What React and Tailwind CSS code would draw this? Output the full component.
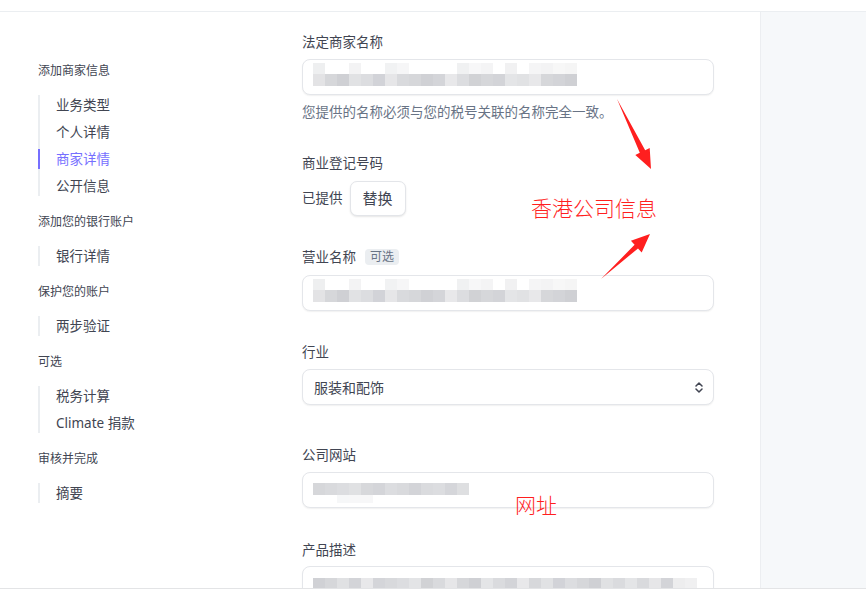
import React from "react";

const NAME_TOP = [
  "#eeeff0", null, null, "#f3f3f4", null, null, "#f1f2f3", "#f6f6f7", null, null, null, null,
  "#f0f1f2", "#f7f7f8", "#f4f4f5", null, "#f1f1f2", null, "#f5f5f6", "#f3f3f4", "#f7f7f7", "#f5f5f5",
];
const NAME_BOTTOM = [
  "#e3e3e5", "#d6d7da", "#cfd0d4", "#e1e2e4", "#dcdde0", "#d2d3d8", "#e6e6e8", "#d9dadd", "#d6d7da", "#d0d1d5", "#d4d5d9",
  "#e8e8ea", "#dcdde0", "#d1d2d5", "#d6d7da", "#d3d4d8", "#e4e5e7", "#e1e2e4", "#e8e8ea", "#d6d7da", "#d3d4d8", "#cfd0d4",
];
const SITE_ROW = [
  "#d6d7da", "#d9dadd", "#dcdde0", "#e0e1e3", "#d7d8db", "#d4d5d9", "#dcdde0", "#d9dadd", "#d3d4d8", "#dadbde", "#dcdde0", "#d5d6da", "#dedfe1",
];
const SITE_LOW = [null, null, "#f6f7f8", "#f7f7f8", "#f7f7f8", null, null, null, null, null, null, null, null];
const DESC_ROW = [
  "#d0d1d5", "#d6d7da", "#e0e1e3", "#d3d4d8", "#e8e8ea", "#d4d5d9", "#d8d9dc", "#dcdde0", "#e3e4e6", "#d1d2d5", "#d9dadd",
  "#e6e6e8", "#d6d7da", "#cfd0d4", "#e4e5e7", "#dadbde", "#d3d4d8", "#e8e8ea", "#d7d8db", "#e1e2e4", "#d2d3d8", "#dcdde0",
  "#d6d7da", "#cfd0d4", "#e0e1e3", "#dadbde", "#e4e5e7", "#d9dadd", "#e6e6e8", "#d3d4d8", "#ededee", "#f0f0f1",
];

function Row({ colors, h }) {
  return (
    <div className="flex">
      {colors.map((c, i) => (
        <div
          key={i}
          className={`w-[12px] ${h === 11 ? "h-[11px]" : h === 8 ? "h-[8px]" : "h-[12px]"}`}
          style={{ backgroundColor: c || "transparent" }}
        />
      ))}
    </div>
  );
}

function Input({ children, className = "" }) {
  return (
    <div
      className={`h-[36px] w-[412px] rounded-[8px] border border-[#e4e6ea] bg-white shadow-[0_1px_1.5px_rgba(0,0,0,0.06)] ${className}`}
    >
      {children}
    </div>
  );
}

function NavSection({ title, items, active, first }) {
  return (
    <div className={first ? "" : "mt-[17px]"}>
      <div className="text-[12px] leading-[18px] text-[#414552]">{title}</div>
      <div className="mt-[15px] flex flex-col gap-[7px] border-l-2 border-[#ebeef1]">
        {items.map((it) => (
          <div
            key={it}
            className={`-ml-[2px] border-l-2 pl-[16px] text-[13.5px] leading-[20px] ${
              it === active ? "border-[#766fff] text-[#766fff]" : "border-transparent text-[#414552]"
            }`}
          >
            {it}
          </div>
        ))}
      </div>
    </div>
  );
}

function Label({ children, className = "" }) {
  return <div className={`text-[13.5px] leading-[20px] text-[#414552] ${className}`}>{children}</div>;
}

export default function App() {
  return (
    <div className="relative flex h-[592px] w-[866px] flex-col overflow-hidden bg-white font-['Noto_Sans','Noto_Sans_CJK_SC',sans-serif]">
      <div className="h-[12px] shrink-0 border-b border-[#ebeef1]" />
      <div className="flex h-[576px] shrink-0 overflow-hidden">
        <div className="flex w-[760px] shrink-0">
          <nav className="w-[302px] shrink-0 pl-[38px] pt-[50px]">
            <NavSection first title="添加商家信息" items={["业务类型", "个人详情", "商家详情", "公开信息"]} active="商家详情" />
            <NavSection title="添加您的银行账户" items={["银行详情"]} />
            <NavSection title="保护您的账户" items={["两步验证"]} />
            <NavSection title="可选" items={["税务计算", "Climate 捐款"]} />
            <NavSection title="审核并完成" items={["摘要"]} />
          </nav>
          <div className="w-[412px] shrink-0 pt-[20px]">
            <Label>法定商家名称</Label>
            <Input className="mt-[7px] pl-[10px] pt-[3px]">
              <Row colors={NAME_TOP} h={11} />
              <Row colors={NAME_BOTTOM} h={12} />
            </Input>
            <div className="mt-[7px] text-[13.5px] leading-[20px] text-[#687385]">
              您提供的名称必须与您的税号关联的名称完全一致。
            </div>

            <Label className="mt-[31px]">商业登记号码</Label>
            <div className="mt-[8px] flex h-[35px] items-center gap-[7px]">
              <span className="text-[13.5px] text-[#414552]">已提供</span>
              <button className="h-[35px] rounded-[7px] border border-[#e3e5e9] bg-white px-[12px] text-[15px] text-[#414552] shadow-[0_1px_2px_rgba(0,0,0,0.1)]">
                替换
              </button>
            </div>

            <div className="mt-[31px] flex h-[20px] items-center gap-[9px]">
              <Label>营业名称</Label>
              <span className="rounded-[4px] bg-[#ebeef1] px-[5px] text-[12px] leading-[16px] text-[#687385]">可选</span>
            </div>
            <Input className="mt-[8px] pl-[10px] pt-[3px]">
              <Row colors={NAME_TOP} h={11} />
              <Row colors={NAME_BOTTOM} h={12} />
            </Input>

            <Label className="mt-[31px]">行业</Label>
            <Input className="mt-[7px] flex items-center justify-between pl-[11px] pr-[10px]">
              <span className="text-[14px] text-[#414552]">服装和配饰</span>
              <svg width="8" height="13" viewBox="0 0 8 13" fill="none">
                <path d="M1 5 L4 2 L7 5" stroke="#414552" strokeWidth="1.5" strokeLinecap="round" strokeLinejoin="round" />
                <path d="M1 8 L4 11 L7 8" stroke="#414552" strokeWidth="1.5" strokeLinecap="round" strokeLinejoin="round" />
              </svg>
            </Input>

            <Label className="mt-[40px]">公司网站</Label>
            <Input className="mt-[7px] pl-[10px] pt-[10px]">
              <Row colors={SITE_ROW} h={12} />
              <Row colors={SITE_LOW} h={8} />
            </Input>

            <Label className="mt-[32px]">产品描述</Label>
            <Input className="mt-[6px] pl-[10px] pt-[11px]">
              <Row colors={DESC_ROW} h={12} />
            </Input>
          </div>
        </div>
        <aside className="flex-1 border-l border-[#eceef1] bg-[#f6f8fa]" />
      </div>
      <div className="flex-1 border-t border-[#e3e4e6] bg-white" />

      <div className="absolute left-[531px] top-[194px] text-[21px] leading-[26px] text-[#ff1f1f] font-['Noto_Sans_CJK_SC',sans-serif] font-light">
        香港公司信息
      </div>
      <div className="absolute left-[515px] top-[491px] text-[21px] leading-[26px] text-[#ff1f1f] font-['Noto_Sans_CJK_SC',sans-serif] font-light">
        网址
      </div>
      <svg className="absolute left-0 top-0" width="866" height="592" viewBox="0 0 866 592">
        <polygon points="617,99 645.2,150.2 649.7,148 651,169 635.3,155 639.8,152.8" fill="#ff1f1f" />
        <polygon points="601,279 634.6,244.8 630.9,240.7 650,234 641.7,252.5 638,248.4" fill="#ff1f1f" />
      </svg>
    </div>
  );
}
